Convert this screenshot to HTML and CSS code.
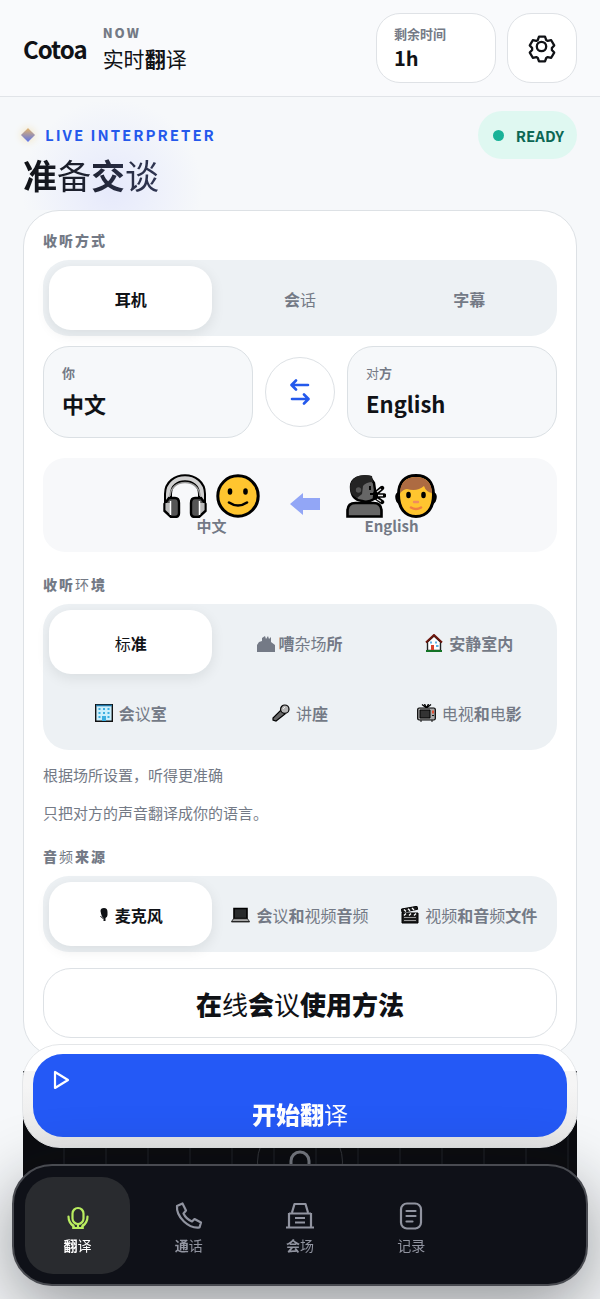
FILE: index.html
```html
<!DOCTYPE html>
<html lang="zh-CN">
<head>
<meta charset="utf-8">
<meta name="viewport" content="width=device-width, initial-scale=1">
<title>Cotoa</title>
<link rel="stylesheet" href="styles.css">
</head>
<body>
<header class="topbar">
  <div class="brand">Cotoa</div>
  <div class="now"><span class="now-tag">NOW</span><span class="now-title"><span class="thin">实时</span>翻<span class="thin">译</span></span></div>
  <div class="time-left"><span class="time-label">剩余时间</span><strong class="time-value">1h</strong></div>
  <button class="settings" aria-label="设置">
    <svg width="30" height="30" viewBox="-15 -16 30 30" fill="none" stroke="currentColor" stroke-width="2.3" stroke-linejoin="round"><path d="M-4.2-9-3-12.3H3L4.2-9 5.7-8.1 9.2-8.8 12.2-3.6 9.9-.9V.9l2.3 2.7-3 5.2-3.5-.7L4.2 9 3 12.3h-6L-4.2 9l-1.5-.9-3.5.7-3-5.2L-9.9.9V-.9l-2.3-2.7 3-5.2 3.5.7z"/><circle cx="-.5" cy="-2.5" r="4.7"/></svg>
  </button>
</header>

<main class="page">
  <section class="hero">
    <div class="hero-copy">
      <p class="eyebrow"><span class="gem"></span>LIVE INTERPRETER</p>
      <h1 class="title">准<span class="thin">备</span>交<span class="thin">谈</span></h1>
    </div>
    <div class="status"><span class="dot"></span>READY</div>
  </section>

  <section class="card">
    <h2 class="label">收听方式</h2>
    <div class="segment">
      <button class="option active">耳机</button>
      <button class="option"><span>会<span class="thin">话</span></span></button>
      <button class="option">字幕</button>
    </div>

    <div class="languages">
      <button class="lang"><span class="lang-role">你</span><span class="lang-name">中文</span></button>
      <button class="swap" aria-label="交换语言">
        <svg width="20" height="28" viewBox="0 0 20 28" fill="none" stroke="currentColor" stroke-width="2.600" stroke-linecap="round" stroke-linejoin="round"><path d="M18 7H2M6 2.500 1.500 7 6 11.500M2 21h16M14 16.500 18.500 21 14 25.500"/></svg>
      </button>
      <button class="lang"><span class="lang-role"><span class="thin">对</span>方</span><span class="lang-name">English</span></button>
    </div>

    <div class="flow">
      <div class="party">
        <div class="faces">
          <svg width="44" height="44" viewBox="0 0 44 44" aria-hidden="true"><path d="M5 30V20C5-1 39-1 39 20v10" fill="none" stroke="#000" stroke-width="8"/><path d="M5 30V20C5-1 39-1 39 20v10" fill="none" stroke="#d0d0d0" stroke-width="4"/><path d="M7 22C8 4 36 4 37 22" fill="none" stroke="#999" stroke-width="1.500"/><path d="M6 24h6q4 0 4 5v10q0 4-4 4H8L1.500 37v-7zM38 24h-6q-4 0-4 5v10q0 4 4 4h4l6.500-6v-7z" fill="#555" stroke="#000" stroke-width="2.400"/><path d="M2.500 29H8v12l-5.500-5zM41.500 29H36v12l5.500-5z" fill="#bbb"/><path d="M7.500 27v14M36.500 27v14" stroke="#fff" stroke-width="1.500"/></svg>
          <svg width="44" height="44" viewBox="0 0 44 44" aria-hidden="true"><circle cx="22" cy="22" r="20.200" fill="#ffc52f" stroke="#000" stroke-width="3"/><ellipse cx="14" cy="17.500" rx="2.300" ry="3.300"/><ellipse cx="29.500" cy="17.500" rx="2.300" ry="3.300"/><path d="M13 28.500q9 6 18 0" fill="none" stroke="#000" stroke-width="2.600" stroke-linecap="round"/></svg>
        </div>
        <span class="party-name">中文</span>
      </div>
      <svg class="flow-arrow" width="30" height="22" viewBox="0 0 30 22" aria-hidden="true"><path d="M0 11 13 0v5h17v12H13v5z" fill="currentColor"/></svg>
      <div class="party">
        <div class="faces">
          <svg width="40" height="44" viewBox="0 0 40 44" aria-hidden="true"><path d="M1.500 42.500V37q0-8 8-8h18q8 0 8 8v5.500z" fill="#666" stroke="#000" stroke-width="2.600"/><path d="M5 13C5 4 14 1 24 3l4 6 1 7-1 9q-6 4-12 2C8 26 5 20 5 13z" fill="#666" stroke="#000" stroke-width="2.400"/><path d="M4 14C4 3 15-1 26 2l1 6q-7 0-10 4l-1 8-5 4Q4 21 4 14z" fill="#242424"/><circle cx="12.500" cy="16" r="2.700" fill="#555"/><path d="M24 12v4M24 20h4" stroke="#000" stroke-width="1.800"/><path d="m29 20 7-6M31 21.500h7M29 23l7 5" stroke="#000" stroke-width="4.400" stroke-linecap="round"/><path d="m31 18 4-3M32 21.500h5M31 25l4 2.500" stroke="#eee" stroke-width="1.300"/></svg>
          <svg width="42" height="44" viewBox="0 0 42 44" aria-hidden="true"><path d="M4 19q-4 2-1.500 8L5 30M38 19q4 2 1.500 8L37 30" fill="#ffc52f" stroke="#000" stroke-width="2.600"/><path d="M3.500 21C3.500 8 10 1.500 21 1.500S38.500 8 38.500 21 32 42.500 21 42.500 3.500 34 3.500 21z" fill="#ffc52f" stroke="#000" stroke-width="3"/><path d="M5 19C5 9 11 3 21 3s16 6 16 16q-6-1-8-7-7 6-17 3-3 0-7 4z" fill="#ad6b42"/><ellipse cx="13.500" cy="21" rx="2.300" ry="3.200"/><ellipse cx="28.500" cy="21" rx="2.300" ry="3.200"/><path d="M19 28h4" stroke="#f08c60" stroke-width="2.400" stroke-linecap="round"/><path d="M16 33.500q5 3 10 0" fill="none" stroke="#f08040" stroke-width="2.600" stroke-linecap="round"/></svg>
        </div>
        <span class="party-name">English</span>
      </div>
    </div>

    <h2 class="label">收听<span class="thin">环</span>境</h2>
    <div class="segment">
      <button class="option active"><span><span class="thin">标</span>准</span></button>
      <button class="option tight"><svg width="18" height="18" viewBox="0 0 18 18" aria-hidden="true"><path d="M0 18v-7l2-3 3-1V4l3-2 1 3 2-3 1 3 2-2v5l4 3v7z" fill="currentColor"/></svg><span>嘈<span class="thin">杂场</span>所</span></button>
      <button class="option"><svg width="18" height="18" viewBox="0 0 18 18" aria-hidden="true"><path d="M2.500 8 9 2l6.500 6v8.500h-13z" fill="#fff" stroke="#222" stroke-width="1.400"/><path d="M1 8.500 9 1l8 7.500" fill="none" stroke="#6b160d" stroke-width="2"/><path d="M6 11h3v5.500H6z" fill="#d9442e"/><path d="M5 7.500h2v2H5zM10 7.500h2v2h-2zM11 11h2.500v2H11z" fill="#61b2e4"/><path d="M1 17h16" stroke="#147326" stroke-width="2"/></svg><span>安静室内</span></button>
      <button class="option"><svg width="18" height="18" viewBox="0 0 18 18" aria-hidden="true"><path d="M.7.700h16.600v16.600H.7z" fill="#cceffc" stroke="#111" stroke-width="1.400"/><path d="M1 1.500h16" stroke="#1e77a8" stroke-width="1.600"/><path d="M3.500 4h2v2h-2zM8 4h2v2H8zM12.500 4h2v2h-2zM3.500 8h2v2h-2zM8 8h2v2H8zM12.500 8h2v2h-2zM3.500 12h2v2h-2zM12.500 12h2v2h-2zM7 12h4v5H7z" fill="#3dafe0"/></svg><span>会<span class="thin">议</span>室</span></button>
      <button class="option"><svg width="18" height="18" viewBox="0 0 18 18" aria-hidden="true"><path d="m9 6 4 4-9 7-3-1 0-2z" fill="#666" stroke="#000" stroke-width="1.200"/><circle cx="12.800" cy="5.200" r="4.200" fill="#b5b5b5" stroke="#000" stroke-width="1.200"/><path d="m11 5 2-2" stroke="#eee"/></svg><span><span class="thin">讲</span>座</span></button>
      <button class="option"><svg width="19" height="18" viewBox="0 0 19 18" aria-hidden="true"><path d="M5 .5 9.500 4 14 .5M7.500 0l2 4 2-4" fill="none" stroke="#000" stroke-width="1.300"/><rect x=".7" y="4" width="17.600" height="12" rx="1.500" fill="#aaa" stroke="#000" stroke-width="1.200"/><path d="M3 6h10v8H3z" fill="#333" stroke="#000"/><path d="M15 6.500h2v3h-2z" fill="#df5034"/><path d="M15 11.500h2M3 17h2M14 17h2" stroke="#111"/></svg><span><span class="thin">电视</span>和<span class="thin">电</span>影</span></button>
    </div>
    <p class="hint">根据场所设置，听得更准确</p>
    <p class="hint">只把对方的声音翻译成你的语言。</p>

    <h2 class="label">音<span class="thin">频</span>来源</h2>
    <div class="segment">
      <button class="option active"><svg width="10" height="14" viewBox="0 0 9 14" aria-hidden="true"><path d="M1 3q0-3 3.500-3Q8 0 8 4v3q0 2-2 3v3H4v-3Q2 9 1 3z" fill="currentColor"/><path d="M1 8q1 2 3 2.500" fill="none" stroke="currentColor"/></svg><span>麦克风</span></button>
      <button class="option"><svg width="19" height="18" viewBox="0 0 19 18" aria-hidden="true"><path d="M3 2.500h13v10H3z" fill="#292b2c" stroke="#000" stroke-width="1.600"/><path d="M2.500 12.700h14l2 2.800H.5z" fill="#aaa" stroke="#111" stroke-width=".8"/><path d="M.5 15.800h18" stroke="#222" stroke-width="1.200"/></svg><span>会<span class="thin">议</span>和<span class="thin">视频</span>音<span class="thin">频</span></span></button>
      <button class="option"><svg width="18" height="18" viewBox="0 0 18 18" aria-hidden="true"><path d="M1 7h16v10H1zM.5 3 16 .3l.7 3L1 6.500z" fill="#1b1b1b" stroke="#000"/><path d="m3 3.500 2 2M7 2.800l2 2M11 2l2 2M3 9.500l2-2M8 9.500l2-2M13 9.500l2-2" stroke="#fff" stroke-width="1.300"/><path d="M3 11.500h12M3 14.500h12" stroke="#aaa" stroke-width=".9"/></svg><span><span class="thin">视频</span>和音<span class="thin">频</span>文件</span></button>
    </div>
    <button class="guide">在<span class="thin">线</span>会<span class="thin">议</span>使用方法</button>
  </section>

  <section class="stage" aria-label="翻译画面">
    <div class="stage-ring">
      <svg width="24" height="24" viewBox="0 0 24 24" fill="none" stroke="currentColor" stroke-width="3"><rect x="3" y="2" width="18" height="24" rx="9"/></svg>
    </div>
  </section>
</main>

<div class="dock">
  <button class="start">
    <svg width="24" height="24" viewBox="0 0 24 24" fill="none" stroke="currentColor" stroke-width="2.200" stroke-linejoin="round" aria-hidden="true"><path d="M5 4v16l13-8z"/></svg>
    <span class="start-text">开始翻<span class="thin">译</span></span>
  </button>
</div>

<nav class="nav">
  <a class="tab current" href="#translate">
    <svg width="28" height="28" viewBox="0 0 28 28" fill="none" stroke="currentColor" stroke-width="2.200" stroke-linecap="round" stroke-linejoin="round" aria-hidden="true"><rect x="8.500" y="6" width="11" height="16" rx="5.500"/><path d="M4.500 14.500q0 6.500 5 9M23.500 14.500q0 6.500-5 9M7 22l3 3M21 22l-3 3M14 22v3M9 26h10"/></svg>
    <span>翻<span class="thin">译</span></span></a>
  <a class="tab" href="#call">
    <svg width="28" height="28" viewBox="0 0 28 28" fill="none" stroke="currentColor" stroke-width="2.200" stroke-linejoin="round" aria-hidden="true"><path d="M2 4 7.500 1.500 11 8.500 8.500 11.500Q11 17 17 19.500L19.500 17 26 20.500 24.500 25.500C14 27 1 15 2 4z"/></svg>
    <span>通<span class="thin">话</span></span></a>
  <a class="tab" href="#venue">
    <svg width="28" height="28" viewBox="0 0 28 28" fill="none" stroke="currentColor" stroke-width="2.200" stroke-linejoin="round" aria-hidden="true"><path d="M0 25.500h28M3 25.500V11M25 25.500V11M6 10.500 8.500 2h11L22 10.500M3 11.500h22M9 16h10M9 20.500h10"/></svg>
    <span>会<span class="thin">场</span></span></a>
  <a class="tab" href="#history">
    <svg width="28" height="28" viewBox="0 0 28 28" fill="none" stroke="currentColor" stroke-width="2.200" stroke-linecap="round" aria-hidden="true"><rect x="4" y="1.500" width="20" height="25" rx="6"/><path d="M9.500 9h9M9.500 14h9M9.500 19.500h6"/></svg>
    <span><span class="thin">记录</span></span></a>
</nav>
</body>
</html>
```

FILE: styles.css
```css
* { box-sizing: border-box; }
body {
  margin: 0;
  min-height: 100vh;
  background: #f6f8fa;
  color: #101216;
  font-family: "Noto Sans CJK SC", "Noto Sans CJK JP", sans-serif;
}
button { font: inherit; color: inherit; border: 0; padding: 0; cursor: pointer; }
svg { display: block; flex: none; }
h1, h2, p { margin: 0; }
.thin { font-weight: 400; }

.topbar {
  display: flex;
  align-items: center;
  padding: 13px 23px;
  background: #f9fafc;
  border-bottom: 1px solid #e1e4e8;
}
.brand { font-size: 24px; font-weight: 700; line-height: 28px; letter-spacing: -1px; margin-right: 16px; padding-top: 2px; }
.now { display: flex; flex-direction: column; margin-right: auto; }
.now-tag { font-size: 13px; line-height: 20px; font-weight: 800; letter-spacing: 2px; color: #747a86; }
.now-title { font-size: 21px; line-height: 30px; font-weight: 700; }
.time-left {
  display: flex;
  flex-direction: column;
  justify-content: center;
  width: 120px;
  height: 70px;
  padding: 0 17px 2px;
  margin-right: 11px;
  background: #fff;
  border: 1px solid #dfe2e6;
  border-radius: 24px;
}
.time-label { font-size: 13px; line-height: 20px; font-weight: 700; color: #747a86; }
.time-value { font-size: 20px; line-height: 27px; font-weight: 700; }
.settings {
  display: grid;
  place-items: center;
  width: 70px;
  height: 70px;
  background: #fff;
  border: 1px solid #dfe2e6;
  border-radius: 24px;
}

.page { padding: 0 23px; }
.hero {
  display: flex;
  justify-content: space-between;
  align-items: flex-start;
  margin: 0 -23px;
  padding: 14px 23px 0;
  background: radial-gradient(circle at 112px 92px, #e6e9fb 0, #edf0fb 40px, #f6f8fa 90px);
}
.hero-copy { height: 99px; }
.eyebrow {
  display: flex;
  align-items: center;
  gap: 12px;
  font-size: 15px;
  line-height: 24px;
  padding: 12px 0 4px;
  font-weight: 700;
  letter-spacing: 2px;
  color: #2459ec;
}
.gem {
  width: 10px;
  height: 10px;
  background: linear-gradient(135deg, #e5b56a, #5b73e8);
  box-shadow: 0 0 8px #f2dfb0;
  transform: rotate(45deg);
}
.title {
  width: max-content;
  font-size: 34px;
  line-height: 48px;
  font-weight: 700;
  background: linear-gradient(90deg, #101216, #303653);
  background-clip: text;
  -webkit-background-clip: text;
  color: transparent;
}
.status {
  display: flex;
  align-items: center;
  gap: 12px;
  height: 48px;
  padding: 0 13px 0 15px;
  border-radius: 24px;
  background: #dff8f1;
  color: #0c6754;
  font-size: 15px;
  font-weight: 700;
}
.dot { width: 11px; height: 11px; border-radius: 50%; background: #19b298; }

.card {
  padding: 18px 19px;
  background: #fff;
  border: 1px solid #dde1e5;
  border-radius: 36px;
}
.label {
  font-size: 14px;
  line-height: 22px;
  margin-bottom: 9px;
  font-weight: 800;
  letter-spacing: 2px;
  color: #747a86;
}
.segment {
  display: grid;
  grid-template-columns: repeat(3, 1fr);
  gap: 6px;
  padding: 6px;
  background: #edf1f4;
  border-radius: 26px;
}
.option {
  display: flex;
  align-items: center;
  justify-content: center;
  gap: 6px;
  height: 64px;
  padding-top: 2px;
  border-radius: 22px;
  background: transparent;
  color: #747a86;
  font-size: 16px;
  font-weight: 700;
  white-space: nowrap;
}
.tight { gap: 3px; }
.active { background: #fff; color: #101216; box-shadow: 0 4px 14px #10121616; }

.languages {
  display: grid;
  grid-template-columns: 1fr 70px 1fr;
  align-items: center;
  gap: 12px;
  margin: 10px 0 20px;
}
.lang {
  display: flex;
  flex-direction: column;
  justify-content: center;
  height: 92px;
  padding: 0 18px 2px;
  background: #f6f8fa;
  border: 1px solid #dbe0e4;
  border-radius: 26px;
  text-align: left;
}
.lang-role { font-size: 13px; line-height: 24px; font-weight: 700; color: #747a86; }
.lang-name { font-size: 22px; line-height: 36px; font-weight: 700; }
.swap {
  display: grid;
  place-items: center;
  height: 70px;
  background: #fff;
  border: 1px solid #dde1e5;
  border-radius: 50%;
  color: #2459ec;
}

.flow {
  display: flex;
  justify-content: center;
  align-items: center;
  gap: 26px;
  height: 94px;
  padding-bottom: 2px;
  margin-bottom: 21px;
  background: #f7f8fa;
  border-radius: 22px;
}
.party { display: flex; flex-direction: column; align-items: center; }
.faces { display: flex; gap: 9px; }
.party-name { font-size: 15px; line-height: 16px; font-weight: 700; color: #747a86; }
.flow-arrow { color: #92a6f6; margin-left: 4px; }

.hint { font-size: 15px; line-height: 22px; margin: 14px 0 16px; color: #747a86; }
.hint + .label { margin-top: 21px; }
.guide {
  width: 100%;
  height: 70px;
  margin-top: 16px;
  background: #fff;
  border: 1px solid #dde1e5;
  border-radius: 28px;
  font-size: 26px;
  font-weight: 800;
}

.stage {
  display: flex;
  justify-content: center;
  height: 150px;
  margin-top: 14px;
  padding-top: 48px;
  background: repeating-linear-gradient(90deg, #0b0c10 0 40px, #15171c 40px 42px);
  overflow: hidden;
}
.stage-ring {
  display: flex;
  justify-content: center;
  width: 86px;
  height: 86px;
  padding-top: 30px;
  border: 1px solid #34363b;
  border-radius: 50%;
  color: #777a82;
}

.dock {
  position: fixed;
  left: 22px;
  right: 22px;
  bottom: 151px;
  padding: 9px 10px 10px;
  border: 1px solid #e4e6e8;
  border-radius: 38px;
  background: linear-gradient(#fffffff5 40%, #e7e7e7);
}
.start {
  display: flex;
  flex-direction: column;
  width: 100%;
  padding: 14px 17px 1px;
  border-radius: 30px;
  background: #2459f6;
  color: #fff;
}
.start-text { align-self: center; font-size: 24px; line-height: 44px; font-weight: 900; }

.nav {
  position: fixed;
  left: 12px;
  right: 12px;
  bottom: 13px;
  display: grid;
  grid-template-columns: repeat(5, 1fr);
  gap: 6px;
  padding: 11px 11px 10px;
  background: #0f1118;
  border: 2px solid #494b51;
  border-radius: 40px;
  box-shadow: 0 20px 70px #10121670;
}
.tab {
  display: flex;
  flex-direction: column;
  align-items: center;
  justify-content: center;
  gap: 5px;
  height: 97px;
  padding-top: 6px;
  border-radius: 28px;
  color: #9194a0;
  font-size: 14px;
  line-height: 20px;
  font-weight: 700;
  text-decoration: none;
}
.current { background: #292b2f; color: #fff; }
.current svg { color: #b9ed60; }
```
